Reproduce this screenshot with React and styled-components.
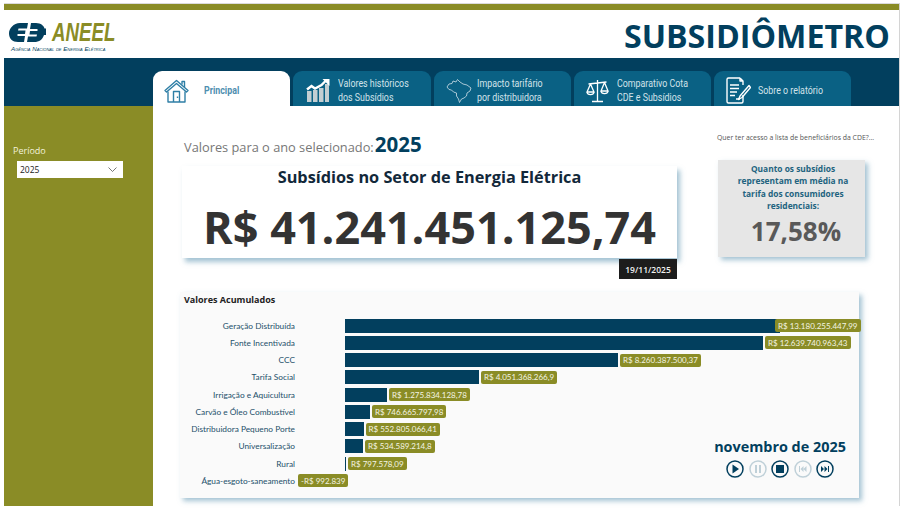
import styled, { createGlobalStyle } from "styled-components";

const navy = "#023f5e";
const olive = "#8a8c26";
const teal = "#0a6184";

const GlobalStyle = createGlobalStyle`
  html, body {
    margin: 0;
    padding: 0;
    background: #fff;
  }
  body {
    font-family: "Open Sans", "Noto Sans", sans-serif;
  }
`;

const Page = styled.div`
  width: 900px;
  height: 508px;
  box-sizing: border-box;
  padding: 3px 0 3px 4px;
  overflow: hidden;
`;

const Frame = styled.div`
  height: 100%;
  display: flex;
  flex-direction: column;
  border-top: 1px solid #dcdcdc;
  border-right: 1px solid #d4d4d4;
`;

const TopStripe = styled.div`
  height: 6px;
  flex: none;
  background: ${olive};
`;

const Header = styled.header`
  height: 48px;
  flex: none;
  box-sizing: border-box;
  display: flex;
  justify-content: space-between;
  align-items: center;
  padding: 3px 9px 0 5px;
  background: #fff;
`;

const Logo = styled.div`
  display: flex;
  flex-direction: column;
  gap: 3px;
  margin-top: 3px;
`;

const LogoTop = styled.div`
  display: flex;
  align-items: center;
  gap: 6px;
`;

const LogoWord = styled.span`
  display: inline-block;
  transform: scaleX(0.72);
  transform-origin: left center;
  font-family: "Liberation Sans", sans-serif;
  font-size: 26px;
  line-height: 20px;
  font-weight: 700;
  font-style: italic;
  color: ${olive};
`;

const LogoSub = styled.span`
  font-family: "Liberation Sans", sans-serif;
  font-size: 6.2px;
  line-height: 7px;
  font-style: italic;
  font-variant: small-caps;
  white-space: nowrap;
  color: ${navy};
  padding-left: 2px;
`;

const Title = styled.h1`
  margin: 0;
  font-size: 32.2px;
  line-height: 40px;
  font-weight: 700;
  color: ${navy};
`;

const TabBand = styled.nav`
  height: 48px;
  flex: none;
  box-sizing: border-box;
  padding: 13px 0 0 149px;
  display: flex;
  gap: 3px;
  background: ${navy};
`;

const Tab = styled.div`
  width: ${(p) => p.$w}px;
  display: flex;
  align-items: center;
  gap: ${(p) => p.$gap}px;
  box-sizing: border-box;
  padding: 4px 0 0 ${(p) => p.$pad}px;
  border-radius: 9px 9px 0 0;
  background: ${(p) => (p.$active ? "#fff" : teal)};
  color: ${(p) => (p.$active ? "#4f8fb0" : "#d3e3ea")};
  font-family: "Roboto", sans-serif;
  font-size: 11.5px;
  line-height: 13.5px;
  font-weight: ${(p) => (p.$active ? 700 : 400)};
  svg {
    flex: none;
  }
`;

const TabText = styled.span`
  display: inline-block;
  white-space: nowrap;
  transform: scaleX(0.77);
  transform-origin: left center;
`;

const Body = styled.div`
  flex: 1;
  min-height: 0;
  display: flex;
`;

const Sidebar = styled.aside`
  width: 149px;
  flex: none;
  box-sizing: border-box;
  padding: 38px 0 0 9px;
  background: ${olive};
`;

const SlicerLabel = styled.div`
  font-size: 9px;
  line-height: 13px;
  color: #f2f2dc;
  margin-bottom: 4px;
`;

const Select = styled.div`
  width: 106px;
  height: 17px;
  margin-left: 4px;
  box-sizing: border-box;
  padding: 0 6px 0 3px;
  display: flex;
  align-items: center;
  justify-content: space-between;
  background: #fff;
  font-size: 8.5px;
  color: #222;
`;

const Main = styled.main`
  flex: 1;
  min-width: 0;
  box-sizing: border-box;
  padding: 26px 0 0 29px;
  display: flex;
  flex-direction: column;
`;

const TopRow = styled.div`
  display: flex;
  gap: 41px;
  height: 160px;
  flex: none;
`;

const LeftCol = styled.div`
  width: 495px;
  flex: none;
`;

const YearLine = styled.div`
  height: 34px;
  display: flex;
  align-items: baseline;
  gap: 1px;
  padding-left: 2px;
  font-size: 12.8px;
  line-height: 25px;
  color: #777;
`;

const YearValue = styled.span`
  font-size: 20.5px;
  font-weight: 700;
  color: ${navy};
`;

const TotalCard = styled.section`
  position: relative;
  height: 92px;
  box-sizing: border-box;
  padding-top: 1px;
  text-align: center;
  background: #fff;
  box-shadow: 3px 4px 5px rgba(90, 145, 175, 0.55);
`;

const TotalTitle = styled.div`
  font-size: 16.3px;
  line-height: 20px;
  font-weight: 700;
  color: #12283a;
`;

const TotalValue = styled.div`
  margin-top: 11px;
  font-size: 45px;
  line-height: 58px;
  font-weight: 700;
  color: #333;
`;

const DateBadge = styled.div`
  position: absolute;
  right: 0;
  top: 93px;
  width: 58px;
  height: 20px;
  display: flex;
  align-items: center;
  justify-content: center;
  background: #1c1c1c;
  color: #f2f2f2;
  font-size: 8.5px;
  font-weight: 600;
`;

const RightCol = styled.div`
  width: 147px;
  flex: none;
  display: flex;
  flex-direction: column;
`;

const LinkText = styled.div`
  height: 29px;
  margin: -1px 0 0 -1px;
  font-size: 6.9px;
  line-height: 14px;
  color: #555;
  white-space: nowrap;
`;

const ShareCard = styled.section`
  height: 97px;
  box-sizing: border-box;
  padding-top: 3px;
  text-align: center;
  background: #e6e6e6;
  box-shadow: 3px 3px 5px rgba(90, 145, 175, 0.55);
`;

const ShareText = styled.div`
  padding-left: 3px;
  font-size: 8.4px;
  line-height: 12.3px;
  font-weight: 700;
  color: #22637f;
`;

const ShareValue = styled.div`
  margin-top: 2px;
  padding-left: 9px;
  font-size: 26px;
  line-height: 34px;
  font-weight: 700;
  color: #595959;
`;

const ChartPanel = styled.section`
  position: relative;
  width: 679px;
  height: 206px;
  flex: none;
  margin-left: -2px;
  box-sizing: border-box;
  padding: 0 0 0 4px;
  background: #fafafa;
  box-shadow: 3px 3px 5px rgba(90, 145, 175, 0.55);
`;

const ChartTitle = styled.div`
  height: 25px;
  font-size: 9px;
  line-height: 15px;
  font-weight: 700;
  color: #222;
`;

const Rows = styled.div`
  display: flex;
  flex-direction: column;
`;

const Row = styled.div`
  height: 17.25px;
  display: flex;
  align-items: center;
`;

const RowLabel = styled.div`
  width: 111px;
  flex: none;
  text-align: right;
  font-family: "Lato", "Open Sans", sans-serif;
  font-size: 8.3px;
  color: #24506a;
  white-space: nowrap;
`;

const Track = styled.div`
  margin-left: 50px;
  flex: 1;
  display: flex;
  align-items: center;
`;

const Bar = styled.div`
  height: 14px;
  flex: none;
  background: ${navy};
`;

const Pill = styled.div`
  position: relative;
  height: 13px;
  flex: none;
  margin-left: ${(p) => p.$offset}px;
  padding: 0 3px;
  border-radius: 2px;
  display: flex;
  align-items: center;
  background: ${olive};
  color: #f4f4e4;
  font-family: "Lato", "Open Sans", sans-serif;
  font-size: 8px;
  white-space: nowrap;
`;

const Player = styled.div`
  position: absolute;
  left: 534px;
  top: 145px;
  width: 132px;
  display: flex;
  flex-direction: column;
  align-items: center;
`;

const PlayerDate = styled.div`
  font-size: 14.4px;
  line-height: 20px;
  font-weight: 700;
  white-space: nowrap;
  color: ${navy};
`;

const PlayerButtons = styled.div`
  display: flex;
  gap: 4.5px;
  margin-top: 3px;
`;

const HomeIcon = () => (
  <svg width="25" height="24" viewBox="0 0 25 24" fill="none" stroke="#2f7fa6" strokeWidth="1.4" strokeLinejoin="round">
    <path d="M1 11.5 12.5 1.5 24 11.5 22.5 13 12.5 4.5 2.5 13Z" />
    <path d="M18 5.5V2.5H20.5V8" />
    <path d="M4 12.5V23H21V12.5" />
    <path d="M9.5 23V12.5H15.5V23" />
    <path d="M13.5 17.5V19" />
  </svg>
);

const ChartIcon = () => (
  <svg width="24" height="24" viewBox="0 0 24 24">
    <path d="M1 23V12H5.5V23ZM7 23V11H11.5V23ZM13 23V9H17.5V23ZM19 23V5H23V23Z" fill="#c3ced2" />
    <path d="M1 10.5 5.5 7 9 9.5 15.5 6 20 1.5" fill="none" stroke="#fff" strokeWidth="2.4" />
    <path d="M16.5 0H23.5V7Z" fill="#fff" />
  </svg>
);

const BrazilIcon = () => (
  <svg width="26" height="25" viewBox="0 0 26 25" fill="none" stroke="#cfe0e8" strokeWidth="0.8" strokeLinejoin="round">
    <path d="M1 9 3 6 6 5.5 7 3 10 4 11.5 1.5 14 4 17 6 21 7 25 10 24 13 21 15 20.5 18 18 20 15.5 21 13.5 24.5 12.5 21 10.5 18 10.5 15 7.5 14 5.5 12 3 11.5Z" />
  </svg>
);

const ScaleIcon = () => (
  <svg width="23" height="24" viewBox="0 0 23 24" fill="none" stroke="#fff" strokeWidth="1.3" strokeLinejoin="round">
    <path d="M11.5 1V22M6 22.5H17M2.5 5 11.5 4 20.5 3" />
    <path d="M4.5 5 1 13H8ZM18.5 3.5 15 12H22Z" />
    <path d="M1 13C1.5 16.5 7.5 16.5 8 13M15 12C15.5 15.5 21.5 15.5 22 12" />
  </svg>
);

const ReportIcon = () => (
  <svg width="25" height="27" viewBox="0 0 25 27" fill="none" stroke="#fff" strokeWidth="1.4" strokeLinejoin="round">
    <path d="M14 1H2.5A1.5 1.5 0 0 0 1 2.5V24.5A1.5 1.5 0 0 0 2.5 26H15.5A1.5 1.5 0 0 0 17 24.5V18M14 1 17 4V8M14 1V4H17" />
    <path d="M4 8H13M4 11.5H13M4 15H11M4 18.5H9M10 22H14" />
    <path d="M23 8.5 14 19 12.5 22.5 16 20.5 24.5 10.5Z" />
  </svg>
);

const Chevron = () => (
  <svg width="9" height="5" viewBox="0 0 9 5" fill="none" stroke="#555" strokeWidth="0.8">
    <path d="M0.5 0.5 4.5 4.5 8.5 0.5" />
  </svg>
);

const LogoMark = () => (
  <svg width="37" height="19" viewBox="0 0 37 19">
    <path d="M11 0H19L18 5.5H9.5L9 7.5H16.5L16 11H8.5L8.5 13H16L15 19H9C3.5 19 0 15.5 0 10.5S4.5 0 11 0Z" fill={navy} />
    <path d="M22 0H27C32 0 35 3 35.5 5.5H37V12H35C33.5 16.5 30.5 19 25 19H18L19 13.5H27.5L28 11.5H20.5L21 8H28.5L28.5 6H21Z" fill={navy} />
  </svg>
);

const RoundButton = ({ dim, children }) => {
  const color = dim ? "#bfd0d8" : navy;
  return (
    <svg width="18" height="18" viewBox="0 0 18 18">
      <circle cx="9" cy="9" r="8" fill="none" stroke={color} strokeWidth="1.5" />
      <g fill={color}>{children}</g>
    </svg>
  );
};

const bars = [
  { label: "Geração Distribuída", width: 435, value: "R$ 13.180.255.447,99", offset: -5 },
  { label: "Fonte Incentivada", width: 418, value: "R$ 12.639.740.963,43", offset: 2 },
  { label: "CCC", width: 273, value: "R$ 8.260.387.500,37", offset: 2 },
  { label: "Tarifa Social", width: 134, value: "R$ 4.051.368.266,9", offset: 2 },
  { label: "Irrigação e Aquicultura", width: 42, value: "R$ 1.275.834.128,78", offset: 2 },
  { label: "Carvão e Óleo Combustível", width: 25, value: "R$ 746.665.797,98", offset: 2 },
  { label: "Distribuidora Pequeno Porte", width: 18.5, value: "R$ 552.805.066,41", offset: 2 },
  { label: "Universalização", width: 18, value: "R$ 534.589.214,8", offset: 2 },
  { label: "Rural", width: 1, value: "R$ 797.578,09", offset: 2 },
  { label: "Água-esgoto-saneamento", width: 0, value: "-R$ 992.839", offset: -47 },
];

export default function App() {
  return (
    <>
      <GlobalStyle />
      <Page>
        <Frame>
          <TopStripe />
          <Header>
            <Logo>
              <LogoTop>
                <LogoMark />
                <LogoWord>ANEEL</LogoWord>
              </LogoTop>
              <LogoSub>Agência Nacional de Energia Elétrica</LogoSub>
            </Logo>
            <Title>SUBSIDIÔMETRO</Title>
          </Header>
          <TabBand>
            <Tab $active $w={137} $pad={11} $gap={15}>
              <HomeIcon />
              <TabText>Principal</TabText>
            </Tab>
            <Tab $w={138} $pad={13} $gap={8}>
              <ChartIcon />
              <TabText>
                Valores históricos
                <br />
                dos Subsídios
              </TabText>
            </Tab>
            <Tab $w={137} $pad={12} $gap={5}>
              <BrazilIcon />
              <TabText>
                Impacto tarifário
                <br />
                por distribuidora
              </TabText>
            </Tab>
            <Tab $w={137} $pad={12} $gap={8}>
              <ScaleIcon />
              <TabText>
                Comparativo Cota
                <br />
                CDE e Subsídios
              </TabText>
            </Tab>
            <Tab $w={137} $pad={12} $gap={7}>
              <ReportIcon />
              <TabText>Sobre o relatório</TabText>
            </Tab>
          </TabBand>
          <Body>
            <Sidebar>
              <SlicerLabel>Período</SlicerLabel>
              <Select>
                2025
                <Chevron />
              </Select>
            </Sidebar>
            <Main>
              <TopRow>
                <LeftCol>
                  <YearLine>
                    Valores para o ano selecionado: <YearValue>2025</YearValue>
                  </YearLine>
                  <TotalCard>
                    <TotalTitle>Subsídios no Setor de Energia Elétrica</TotalTitle>
                    <TotalValue>R$ 41.241.451.125,74</TotalValue>
                    <DateBadge>19/11/2025</DateBadge>
                  </TotalCard>
                </LeftCol>
                <RightCol>
                  <LinkText>Quer ter acesso a lista de beneficiários da CDE?...</LinkText>
                  <ShareCard>
                    <ShareText>
                      Quanto os subsídios
                      <br />
                      representam em média na
                      <br />
                      tarifa dos consumidores
                      <br />
                      residenciais:
                    </ShareText>
                    <ShareValue>17,58%</ShareValue>
                  </ShareCard>
                </RightCol>
              </TopRow>
              <ChartPanel>
                <ChartTitle>Valores Acumulados</ChartTitle>
                <Rows>
                  {bars.map((b) => (
                    <Row key={b.label}>
                      <RowLabel>{b.label}</RowLabel>
                      <Track>
                        <Bar style={{ width: b.width }} />
                        <Pill $offset={b.offset}>{b.value}</Pill>
                      </Track>
                    </Row>
                  ))}
                </Rows>
                <Player>
                  <PlayerDate>novembro de 2025</PlayerDate>
                  <PlayerButtons>
                    <RoundButton>
                      <path d="M6.5 4.5 13 9 6.5 13.5Z" />
                    </RoundButton>
                    <RoundButton dim>
                      <path d="M6 5H8V13H6ZM10 5H12V13H10Z" />
                    </RoundButton>
                    <RoundButton>
                      <path d="M5 5H13V13H5Z" />
                    </RoundButton>
                    <RoundButton dim>
                      <path d="M5 6H6V12H5ZM6.5 9 9.5 6V12ZM9.5 9 12.5 6V12Z" />
                    </RoundButton>
                    <RoundButton>
                      <path d="M5 6 8 9 5 12ZM8.5 6 11.5 9 8.5 12ZM12 6H13V12H12Z" />
                    </RoundButton>
                  </PlayerButtons>
                </Player>
              </ChartPanel>
            </Main>
          </Body>
        </Frame>
      </Page>
    </>
  );
}
